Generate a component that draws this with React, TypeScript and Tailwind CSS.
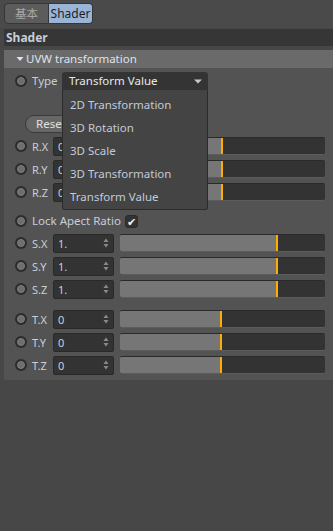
import React from "react";

const Radio = () => (
  <div className="w-[12px] h-[12px] rounded-full bg-[#2c2c2c] flex items-center justify-center shrink-0">
    <div className="w-[8px] h-[8px] rounded-full bg-[#6e6e6e] border border-[#7c7c7c]" />
  </div>
);

const Spinner = () => (
  <svg width="6" height="10" viewBox="0 0 6 10" className="shrink-0">
    <path d="M3 0.5 L5.5 4 L0.5 4 Z" fill="#8a8a8a" />
    <path d="M3 9.5 L5.5 6 L0.5 6 Z" fill="#8a8a8a" />
  </svg>
);

const ParamRow = ({ label, value, fill, mt }: { label: string; value: string; fill: number; mt: string }) => (
  <div className={`flex items-center h-[18px] pl-[11px] ${mt}`}>
    <Radio />
    <div className="ml-[5px] w-[21px] text-[#c9ced8] whitespace-nowrap">{label}</div>
    <div className="w-[61px] h-[19px] bg-[#333333] border border-[#292929] rounded-[2px] flex items-center pl-[4px] pr-[4px] justify-between">
      <span className="text-[#c9d0de]">{value}</span>
      <Spinner />
    </div>
    <div className="ml-[6px] w-[205px] h-[18px] bg-[#333333] border-t border-[#2a2a2a] border-b border-b-[#5c5c5c] rounded-[2px] flex overflow-hidden">
      <div className="bg-[#767676] h-full" style={{ width: fill }} />
      <div className="bg-[#ffad00] w-[2px] h-full" />
    </div>
  </div>
);

export default function App() {
  return (
    <div
      className="w-[333px] h-[531px] bg-[#474747] text-[11px] leading-none overflow-hidden"
      style={{ fontFamily: '"Noto Sans", "Noto Sans CJK SC", sans-serif' }}
    >
      <div className="h-[28px] bg-[#4a4a4a] flex items-start pt-[3px] pl-[4px]">
        <div className="w-[45px] h-[21px] bg-[#5c5c5c] border border-[#363636] rounded-l-[4px] flex items-center justify-center text-[#a9a9a9] text-[11.5px]">
          基本
        </div>
        <div className="w-[44px] h-[21px] bg-[#9ab4d8] border border-l-0 border-[#363636] rounded-r-[4px] flex items-center justify-center text-[#1a1f28] text-[12px]">
          Shader
        </div>
      </div>
      <div className="pl-[4px]">
        <div className="h-[17px] mt-[1px] bg-[#363636] flex items-center pl-[2px] font-bold text-[#c6cdd8] text-[12px]">
          Shader
        </div>
        <div className="h-[4px]" />
        <div className="h-[18px] bg-[#6a6a6a] flex items-center pl-[12px] text-[#dfe3ea] text-[11.5px]">
          <svg width="8" height="6" viewBox="0 0 8 6" className="mr-[2px]">
            <path d="M0.5 1 L7.5 1 L4 5 Z" fill="#dfe3ea" />
          </svg>
          UVW transformation
        </div>
        <div className="relative h-[312px] bg-[#535353] flex flex-col">
          <div className="flex items-center h-[18px] pl-[11px] mt-[4px]">
            <Radio />
            <div className="ml-[5px] w-[30px] text-[#c9ced8] text-[11.5px]">Type</div>
            <div className="w-[146px] h-[18px] bg-[#343434] rounded-t-[3px] flex items-center justify-between pl-[7px] pr-[6px] text-[#e6e8ec] text-[11.5px]">
              <span>Transform Value</span>
              <svg width="8" height="5" viewBox="0 0 8 5">
                <path d="M0 0.5 L8 0.5 L4 4.5 Z" fill="#c8c8c8" />
              </svg>
            </div>
          </div>
          <div className="flex items-center h-[18px] pl-[21px] mt-[25px]">
            <div className="w-[60px] h-[18px] bg-[#676767] border border-[#3a3a3a] rounded-[9px] flex items-center pl-[10px] text-[#e0e0e0] text-[11.5px]">
              Reset
            </div>
          </div>
          <ParamRow label="R.X" value="0" fill={101} mt="mt-[4px]" />
          <ParamRow label="R.Y" value="0" fill={101} mt="mt-[5px]" />
          <ParamRow label="R.Z" value="0" fill={101} mt="mt-[5px]" />
          <div className="flex items-center h-[18px] pl-[11px] mt-[11px]">
            <Radio />
            <div className="ml-[5px] text-[#c9ced8] whitespace-nowrap text-[11.5px]">Lock Apect Ratio</div>
            <div className="ml-[4px] w-[13px] h-[13px] bg-[#333333] border border-[#2a2a2a] rounded-[3px] flex items-center justify-center text-[#f0f0f0] text-[11px]">
              ✔
            </div>
          </div>
          <ParamRow label="S.X" value="1." fill={156} mt="mt-[4px]" />
          <ParamRow label="S.Y" value="1." fill={156} mt="mt-[5px]" />
          <ParamRow label="S.Z" value="1." fill={156} mt="mt-[5px]" />
          <ParamRow label="T.X" value="0" fill={100} mt="mt-[12px]" />
          <ParamRow label="T.Y" value="0" fill={100} mt="mt-[5px]" />
          <ParamRow label="T.Z" value="0" fill={100} mt="mt-[5px]" />

          <div className="absolute left-[58px] top-[22px] w-[146px] h-[120px] bg-[#444444] border border-[#2b2b2b] border-t-0 rounded-b-[3px] pt-[3px] flex flex-col text-[#c3cad8] text-[11.5px]">
            {["2D Transformation", "3D Rotation", "3D Scale", "3D Transformation", "Transform Value"].map((t) => (
              <div key={t} className="h-[23px] flex items-center pl-[7px]">
                {t}
              </div>
            ))}
          </div>
        </div>
      </div>
    </div>
  );
}
